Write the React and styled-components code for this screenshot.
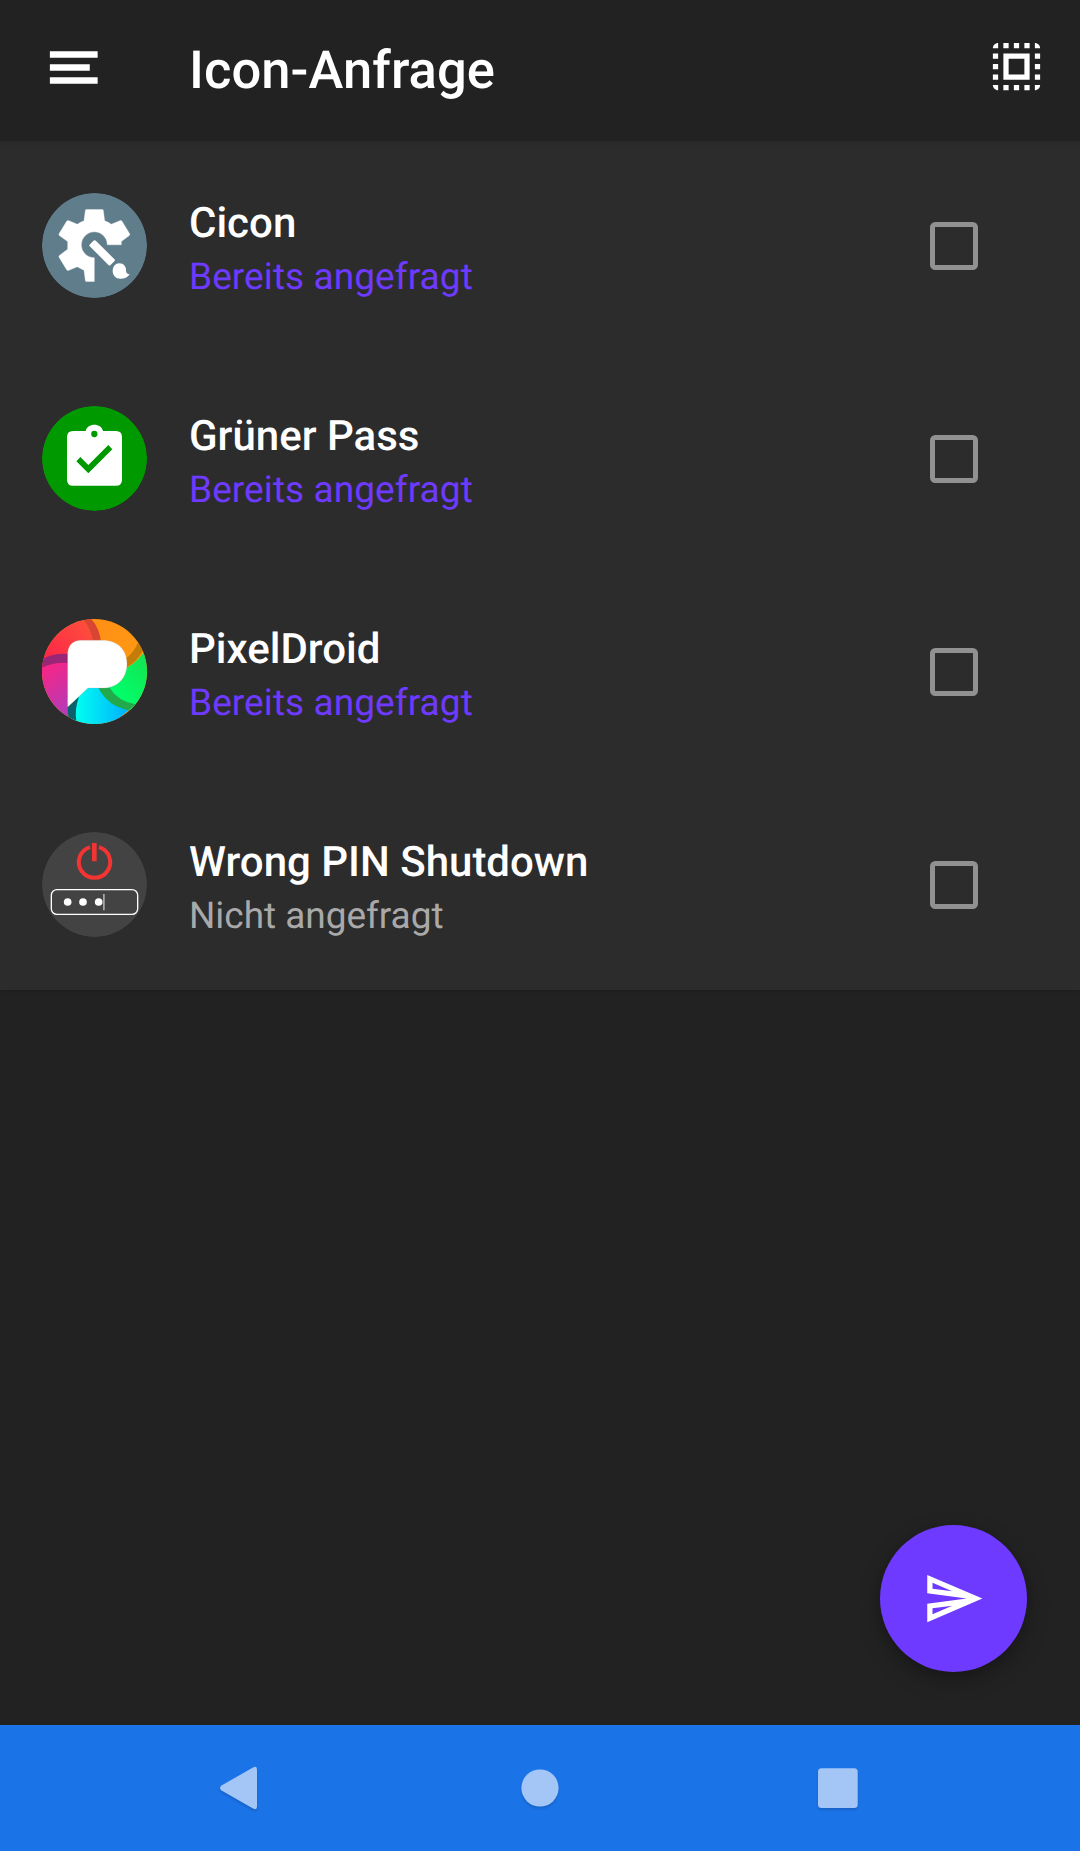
import React, { useState } from "react";
import styled, { createGlobalStyle } from "styled-components";

const GlobalStyle = createGlobalStyle`
  * { box-sizing: border-box; }
  body { margin: 0; background: #212121; }
`;

const Screen = styled.div`
  width: 1080px;
  height: 1851px;
  display: flex;
  flex-direction: column;
  background: #222222;
  font-family: Roboto, "Noto Sans", sans-serif;
  text-rendering: geometricPrecision;
  overflow: hidden;
`;

const Toolbar = styled.header`
  flex: none;
  position: relative;
  z-index: 1;
  height: 141px;
  padding: 0 32px 8px 42px;
  display: flex;
  align-items: center;
  background: #222222;
  box-shadow: 0 1px 6px rgba(0, 0, 0, 0.14);
`;

const IconButton = styled.button`
  flex: none;
  width: 63px;
  height: 63px;
  padding: 0;
  border: 0;
  background: none;
  color: #ffffff;
  svg { display: block; width: 63px; height: 63px; fill: currentColor; }
`;

const Title = styled.h1`
  flex: 1;
  margin: 7px 0 0 84px;
  font-size: 52.5px;
  line-height: 62px;
  letter-spacing: 0.08px;
  font-weight: 500;
  color: #ffffff;
`;

const List = styled.ul`
  flex: none;
  list-style: none;
  margin: -3px 0 0;
  padding: 0;
  background: #2c2c2c;
  box-shadow: 0 1px 5px rgba(0, 0, 0, 0.2);
`;

const Row = styled.li`
  height: 213px;
  padding: 55px 95px 53px 42px;
  display: flex;
  align-items: flex-start;
`;

const AppIcon = styled.svg`
  flex: none;
  width: 105px;
  height: 105px;
  border-radius: 50%;
`;

const Labels = styled.div`
  flex: 1;
  margin-left: 42px;
  display: flex;
  flex-direction: column;
`;

const Name = styled.span`
  margin-top: 6px;
  font-size: 42px;
  line-height: 50px;
  font-weight: 500;
  color: #ffffff;
`;

const Status = styled.span`
  margin-top: 7px;
  font-size: 37px;
  line-height: 44px;
  letter-spacing: ${(p) => (p.$requested ? "0.08px" : "-0.04px")};
  color: ${(p) => (p.$requested ? "#6f3aff" : "#a9a9a9")};
`;

const Checkbox = styled.button`
  flex: none;
  width: 48px;
  height: 48px;
  margin: 29px 7px 0 0;
  padding: 0;
  border: 5.25px solid #919191;
  border-radius: 5.25px;
  background: ${(p) => (p.$checked ? "#6f3aff" : "transparent")};
`;

const Content = styled.main`
  flex: 1;
  display: flex;
  align-items: flex-end;
  justify-content: flex-end;
  padding: 0 53px 53px 0;
`;

const Fab = styled.button`
  width: 147px;
  height: 147px;
  padding: 0;
  border: 0;
  border-radius: 50%;
  display: flex;
  align-items: center;
  justify-content: center;
  background: #6f3aff;
  box-shadow: 0 8px 22px rgba(0, 0, 0, 0.28), 0 3px 7px rgba(0, 0, 0, 0.08);
  svg { width: 63px; height: 63px; fill: #ffffff; }
`;

const NavBar = styled.nav`
  flex: none;
  height: 126px;
  padding: 0 179px;
  display: flex;
  align-items: center;
  justify-content: space-between;
  background: #1b73e8;
`;

const NavIcon = styled.svg`
  width: 126px;
  height: 126px;
  fill: #a3c6f7;
  filter: drop-shadow(0 2px 1px rgba(0, 0, 0, 0.14));
`;

const CiconIcon = () => (
  <AppIcon viewBox="36 38.5 315 315">
    <circle cx="193.500" cy="196" r="157.500" fill="#607d8b" />
    <path
      fill="#fff"
      stroke="#fff"
      strokeWidth="1"
      strokeLinejoin="round"
      d="M169 88h48q3 0 3 3l4 31q11 4 20 10l27-11q3-1 5 2l23 38q1 3-1 5l-24 18v10h-42a39 39 0 1 0-39 39v71h-24q-3 0-3-3l-4-31q-11-4-20-10l-27 11q-3 1-5-2l-23-38q-1-3 1-5l25-19v-23l-25-18q-2-2-1-5l23-38q2-3 5-2l27 11q9-6 20-10l4-31q0-3 3-3z"
    />
    <path fill="#fff" d="M180 192l9-9q5-5 10 0l55 55q2 3-1 5l-12 12q-2 2-5 0l-56-56q-4-3 0-7z" />
    <path fill="#fff" d="M268 249c13 0 21 10 20 22 0 7 4 11 11 11-6 9-16 14-27 14-15 0-24-10-24-24 0-13 8-23 20-23z" />
  </AppIcon>
);

const GreenPassIcon = () => (
  <AppIcon viewBox="36 33 315 315">
    <circle cx="193.500" cy="190.500" r="157.500" fill="#009a00" />
    <path fill="#fff" d="M129 108h38c5-25 47-25 52 0h39q18 0 18 18v128q0 18-18 18H129q-18 0-18-18V126q0-18 18-18z" />
    <circle cx="193" cy="117" r="9.500" fill="#009a00" />
    <path fill="#009a00" d="M139 199l12-13 24 24 60-60 12 13-72 72z" />
  </AppIcon>
);

const PixelDroidIcon = () => (
  <AppIcon viewBox="36 33 315 315">
    <defs>
      <linearGradient id="pd-red" x1="0" y1="1" x2="1" y2="0">
        <stop offset="0.2" stopColor="#fb2747" />
        <stop offset="1" stopColor="#ff533a" />
      </linearGradient>
      <linearGradient id="pd-orange" x1="0" y1="0" x2="1" y2="1">
        <stop offset="0" stopColor="#ff8a17" />
        <stop offset="1" stopColor="#ffa010" />
      </linearGradient>
      <linearGradient id="pd-green" x1="0" y1="1" x2="1" y2="0">
        <stop offset="0.3" stopColor="#00ff6b" />
        <stop offset="1" stopColor="#17e04e" />
      </linearGradient>
      <linearGradient id="pd-cyan" x1="0" y1="0" x2="1" y2="0">
        <stop offset="0.1" stopColor="#00fff0" />
        <stop offset="0.9" stopColor="#00b8ff" />
      </linearGradient>
      <linearGradient id="pd-pink" x1="0" y1="0" x2="0.3" y2="1">
        <stop offset="0.1" stopColor="#f72586" />
        <stop offset="1" stopColor="#b43bb8" />
      </linearGradient>
    </defs>
    <rect x="36" y="33" width="315" height="315" fill="url(#pd-orange)" />
    <path fill="url(#pd-red)" d="M36 33H156Q184 60 188 100V200H36z" />
    <path fill="#da4432" d="M157 33h26q28 28 30 75h-24q-3-44-32-75z" />
    <path fill="url(#pd-green)" d="M351 118Q330 157 290 180L205 235Q239 290 300 307L351 300z" />
    <path fill="#c47c08" d="M325 101l13 28q-18 33-49 50v-29q23-17 36-49z" />
    <path fill="url(#pd-cyan)" d="M138 230h68q30 52 91 76l-50 42H120z" />
    <path fill="#22a94b" d="M204 238h34q25 42 78 51l-20 18q-63-12-92-69z" />
    <path fill="url(#pd-pink)" d="M36 173Q75 159 114 166V330L100 348H36z" />
    <path fill="#9a2678" d="M36 153q36-18 78-15v27q-43-3-78 14z" />
    <path fill="#08616c" d="M113 296l34-30q-14 39-8 72l-24-9z" />
    <path fill="#fff" stroke="#b5a5a5" strokeOpacity="0.5" strokeWidth="1.500" d="M153 97h66c44 0 72 29 72 70 0 43-28 73-72 73h-45l-61 57V139c0-26 15-42 40-42z" />
  </AppIcon>
);

const ShutdownIcon = () => (
  <AppIcon viewBox="36 36 315 315">
    <circle cx="193.500" cy="193.500" r="157.500" fill="#434343" />
    <path fill="none" stroke="#f23433" strokeWidth="12" d="M180 81.500a47 47 0 1 0 27 0" />
    <path fill="#f23433" d="M186 69h14v55h-14z" />
    <rect x="64" y="209" width="259" height="74" rx="17" fill="none" stroke="#fff" strokeWidth="4" />
    <circle cx="113" cy="246" r="11.500" fill="#fff" />
    <circle cx="159" cy="246" r="11.500" fill="#fff" />
    <circle cx="206" cy="246" r="11.500" fill="#fff" />
    <path fill="#d8d8d8" d="M220 222h3.500v49H220z" />
  </AppIcon>
);

const apps = [
  { name: "Cicon", requested: true, Icon: CiconIcon },
  { name: "Grüner Pass", requested: true, Icon: GreenPassIcon },
  { name: "PixelDroid", requested: true, Icon: PixelDroidIcon },
  { name: "Wrong PIN Shutdown", requested: false, Icon: ShutdownIcon },
];

export default function App() {
  const [selected, setSelected] = useState({});
  const toggle = (name) => setSelected((s) => ({ ...s, [name]: !s[name] }));

  return (
    <Screen>
      <GlobalStyle />
      <Toolbar>
        <IconButton aria-label="Menü">
          <svg viewBox="0 0 24 24">
            <path d="M3 6.200h18.200v2.450H3zM3 11.150h15.200v2.450H3zM3 16.100h18.200v2.450H3z" />
          </svg>
        </IconButton>
        <Title>Icon-Anfrage</Title>
        <IconButton aria-label="Alle auswählen">
          <svg viewBox="0 0 24 24">
            <path d="M3 5h2V3c-1.100 0-2 .9-2 2zm0 8h2v-2H3v2zm4 8h2v-2H7v2zM3 9h2V7H3v2zm10-6h-2v2h2V3zm6 0v2h2c0-1.100-.9-2-2-2zM5 21v-2H3c0 1.100.9 2 2 2zm-2-4h2v-2H3v2zM9 3H7v2h2V3zm2 18h2v-2h-2v2zm8-8h2v-2h-2v2zm0 8c1.100 0 2-.9 2-2h-2v2zm0-12h2V7h-2v2zm0 8h2v-2h-2v2zm-4 4h2v-2h-2v2zm0-16h2V3h-2v2zM7 17h10V7H7v10zm2-8h6v6H9V9z" />
          </svg>
        </IconButton>
      </Toolbar>
      <List>
        {apps.map(({ name, requested, Icon }) => (
          <Row key={name}>
            <Icon />
            <Labels>
              <Name>{name}</Name>
              <Status $requested={requested}>
                {requested ? "Bereits angefragt" : "Nicht angefragt"}
              </Status>
            </Labels>
            <Checkbox
              role="checkbox"
              aria-checked={!!selected[name]}
              aria-label={name}
              $checked={selected[name]}
              onClick={() => toggle(name)}
            />
          </Row>
        ))}
      </List>
      <Content>
        <Fab aria-label="Senden">
          <svg viewBox="0 0 24 24">
            <path d="M4.010 6.030l7.510 3.220-7.520-1 .010-2.220m7.500 8.720L4 17.970v-2.220l7.510-1M2.010 3L2 10l15 2-15 2 .010 7L23 12 2.010 3z" />
          </svg>
        </Fab>
      </Content>
      <NavBar>
        <NavIcon viewBox="0 0 126 126">
          <path d="M42.500 60.500L74 42.500q4-2 4 2v37q0 4-4 2L42.500 65.500q-3-2.500 0-5z" />
        </NavIcon>
        <NavIcon viewBox="0 0 126 126">
          <circle cx="63" cy="63" r="18.600" />
        </NavIcon>
        <NavIcon viewBox="0 0 126 126">
          <rect x="43" y="43.200" width="39.700" height="39.700" rx="3.500" />
        </NavIcon>
      </NavBar>
    </Screen>
  );
}
